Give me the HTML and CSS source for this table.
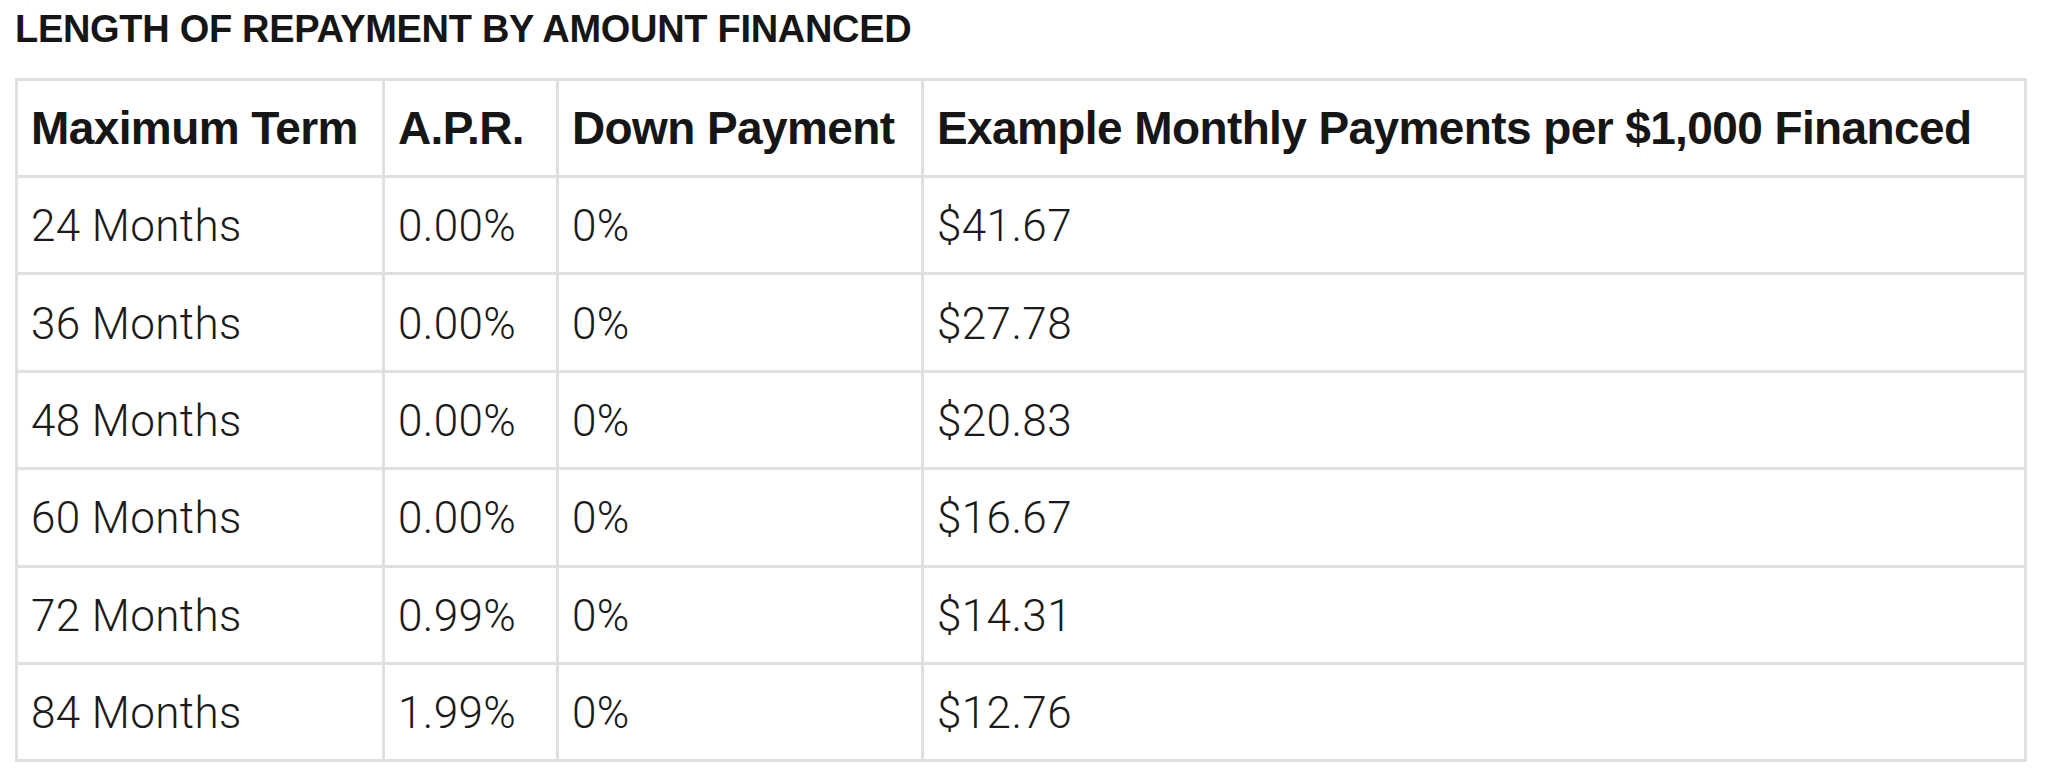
FILE: index.html
```html
<!DOCTYPE html>
<html lang="en">
<head>
<meta charset="utf-8">
<title>Length of Repayment by Amount Financed</title>
<link rel="stylesheet" href="styles.css">
</head>
<body>
<section class="finance">
  <h2 class="finance-title">LENGTH OF REPAYMENT BY AMOUNT FINANCED</h2>
  <table class="finance-table">
    <colgroup>
      <col class="c-term">
      <col class="c-apr">
      <col class="c-down">
      <col class="c-example">
    </colgroup>
    <thead>
      <tr>
        <th>Maximum Term</th>
        <th>A.P.R.</th>
        <th>Down Payment</th>
        <th>Example Monthly Payments per $1,000 Financed</th>
      </tr>
    </thead>
    <tbody>
      <tr><td>24 Months</td><td>0.00%</td><td>0%</td><td>$41.67</td></tr>
      <tr><td>36 Months</td><td>0.00%</td><td>0%</td><td>$27.78</td></tr>
      <tr><td>48 Months</td><td>0.00%</td><td>0%</td><td>$20.83</td></tr>
      <tr><td>60 Months</td><td>0.00%</td><td>0%</td><td>$16.67</td></tr>
      <tr><td>72 Months</td><td>0.99%</td><td>0%</td><td>$14.31</td></tr>
      <tr><td>84 Months</td><td>1.99%</td><td>0%</td><td>$12.76</td></tr>
    </tbody>
  </table>
</section>
</body>
</html>
```

FILE: styles.css
```css
html, body {
  margin: 0;
  padding: 0;
  background: #ffffff;
}

body {
  color: #1b1b1b;
  font-family: "Liberation Sans", Arial, sans-serif;
}

.finance {
  padding: 10px 0 0 15px;
}

.finance-title {
  margin: 0 0 30px 0;
  font-size: 38px;
  line-height: 38px;
  font-weight: 700;
  letter-spacing: -0.3px;
  color: #161616;
}

.finance-table {
  border-collapse: collapse;
  table-layout: fixed;
  width: 2012px;
  border: 3px solid #e0e0e0;
}

.c-term { width: 367px; }
.c-apr { width: 174px; }
.c-down { width: 365px; }
.c-example { width: auto; }

.finance-table th,
.finance-table td {
  border: 3px solid #e0e0e0;
  padding: 0 12px 0 13px;
  text-align: left;
  vertical-align: middle;
  white-space: nowrap;
}

.finance-table th {
  height: 94px;
  font-family: "Liberation Sans", Arial, sans-serif;
  font-size: 46px;
  font-weight: 700;
  letter-spacing: -0.6px;
  color: #161616;
}

.finance-table td {
  height: 92.4px;
  padding-top: 2px;
  font-family: Roboto, "Liberation Sans", Arial, sans-serif;
  font-size: 44px;
  font-weight: 300;
  letter-spacing: 0.4px;
  color: #1b1b1b;
}
```
